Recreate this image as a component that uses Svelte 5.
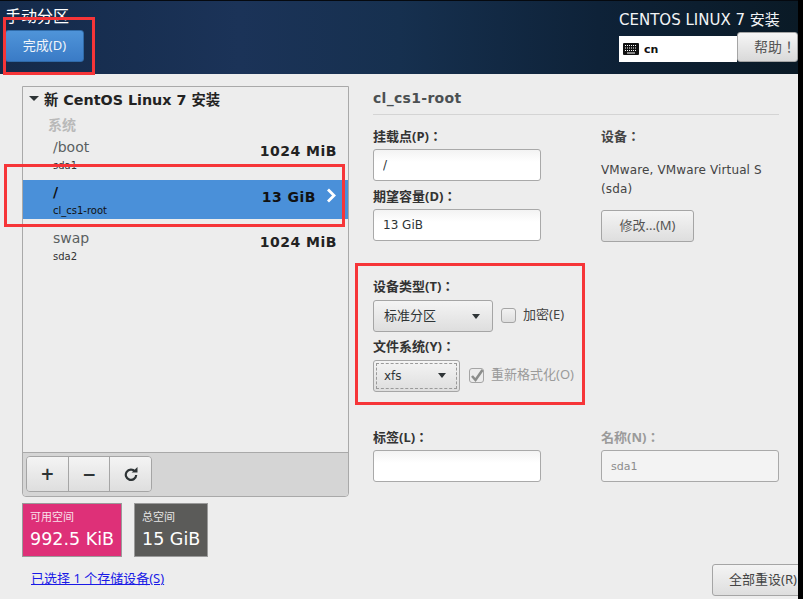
<script>
	const mounts = [
		{ path: '/boot', dev: 'sda1', size: '1024 MiB' },
		{ path: '/', dev: 'cl_cs1-root', size: '13 GiB', selected: true },
		{ path: 'swap', dev: 'sda2', size: '1024 MiB' }
	];
</script>

<div class="screen">
	<header>
		<div class="head-left">
			<h1>手动分区</h1>
			<button class="done">完成(D)</button>
		</div>
		<div class="head-right">
			<div class="product">CENTOS LINUX 7 安装</div>
			<div class="head-tools">
				<div class="kbd">
					<svg width="16" height="12" viewBox="0 0 16 12">
						<rect width="16" height="12" rx="1" fill="#111" />
						<path d="M2 2.5h12M2 5h12M2 7.5h12" stroke="#fff" stroke-width="1" stroke-dasharray="1 1" />
						<path d="M4 10h8" stroke="#fff" stroke-width="1" />
					</svg>
					<span>cn</span>
				</div>
				<button class="help">帮助！</button>
			</div>
		</div>
	</header>

	<main>
		<section class="left">
			<div class="panel">
				<div class="tree">
					<div class="root-row"><span class="caret"></span>新 CentOS Linux 7 安装</div>
					<div class="group">系统</div>
					{#each mounts as m}
						<div class="mount" class:selected={m.selected}>
							<div class="mount-names">
								<div class="mount-path">{m.path}</div>
								<div class="mount-dev">{m.dev}</div>
							</div>
							<div class="mount-size">{m.size}</div>
							{#if m.selected}
								<svg class="chev" width="11" height="15" viewBox="0 0 11 15">
									<path d="M2 1.5l6 6-6 6" fill="none" stroke="#fff" stroke-width="2.8" />
								</svg>
							{/if}
						</div>
					{/each}
				</div>
				<div class="toolbar">
					<div class="tool-group">
						<button>+</button>
						<button>−</button>
						<button aria-label="刷新">
							<svg width="14" height="14" viewBox="0 0 14 14">
								<path d="M11 4.4A5.2 5.2 0 1 0 12.2 8" fill="none" stroke="#2e3436" stroke-width="2.2" />
								<path d="M7.6 5.6h5.9V0z" fill="#2e3436" />
							</svg>
						</button>
					</div>
				</div>
			</div>
			<div class="tiles">
				<div class="tile free"><small>可用空间</small><strong>992.5 KiB</strong></div>
				<div class="tile total"><small>总空间</small><strong>15 GiB</strong></div>
			</div>
			<a class="devices" href="#devices">已选择 1 个存储设备(S)</a>
		</section>

		<section class="right">
			<h2>cl_cs1-root</h2>
			<div class="top-fields">
				<div class="col-a">
					<label for="mp">挂载点(P)：</label>
					<input id="mp" class="entry" value="/" />
					<label for="cap" class="second">期望容量(D)：</label>
					<input id="cap" class="entry" value="13 GiB" />
				</div>
				<div class="col-b">
					<div class="b-title">设备：</div>
					<p>VMware, VMware Virtual S<br />(sda)</p>
					<button class="modify">修改...(M)</button>
				</div>
			</div>

			<div class="type-box">
				<div class="label-row">设备类型(T)：</div>
				<div class="ctrl-row">
					<button class="combo wide">标准分区<span class="arrow"></span></button>
					<span class="check"></span>
					<span class="check-label">加密(E)</span>
				</div>
				<div class="label-row fs">文件系统(Y)：</div>
				<div class="ctrl-row">
					<button class="combo narrow"><span class="focus">xfs<span class="arrow"></span></span></button>
					<span class="check disabled">
						<svg width="16" height="16" viewBox="0 0 16 16">
							<path d="M3 8l3.5 4L13.5 2" fill="none" stroke="#8b8d8b" stroke-width="2.6" />
						</svg>
					</span>
					<span class="check-label muted">重新格式化(O)</span>
				</div>
			</div>

			<div class="bottom-fields">
				<div>
					<label for="tag">标签(L)：</label>
					<input id="tag" class="entry tag" value="" />
				</div>
				<div>
					<label for="nm" class="muted-label">名称(N)：</label>
					<input id="nm" class="entry name" value="sda1" disabled />
				</div>
			</div>

			<div class="reset-row"><button class="reset">全部重设(R)</button></div>
		</section>
	</main>

	<!-- red annotation rectangles drawn over the shot -->
	<div class="mark m1"></div>
	<div class="mark m2"></div>
	<div class="mark m3"></div>
</div>

<style>
	:global(body) {
		margin: 0;
		background: #000;
		font-family: 'DejaVu Sans', 'Noto Sans CJK SC', sans-serif;
	}

	* {
		box-sizing: border-box;
	}

	.screen {
		position: relative;
		width: 798px;
		height: 599px;
		overflow: hidden;
		background: #ededed;
		color: #2e3436;
		font-size: 12px;
	}

	button {
		font-family: 'Noto Sans', 'Noto Sans CJK SC', sans-serif;
		color: #2e3436;
		border: 1px solid #a5a5a5;
		border-radius: 3px;
		background: linear-gradient(#f4f4f4, #dedede);
		padding: 0 0 3px;
	}

	header {
		display: flex;
		justify-content: space-between;
		height: 74px;
		border-top: 1px solid #05090f;
		background: linear-gradient(90deg, #142a4a 0%, #1b3358 30%, #16304f 50%, #0e2238 75%, #0a1a26 100%);
	}

	.head-left {
		padding-left: 5px;
	}

	h1 {
		margin: 0;
		height: 29px;
		padding-top: 7px;
		font-size: 16px;
		line-height: 18px;
		font-weight: 400;
		color: #fff;
		overflow: hidden;
	}

	.done {
		display: block;
		width: 79px;
		height: 32px;
		border: 1px solid #2f6aa8;
		background: linear-gradient(#4f94d9, #3a7bc6);
		color: #f1f5fa;
		font-size: 13px;
	}

	.head-right {
		display: flex;
		flex-direction: column;
		width: 179px;
	}

	.product {
		height: 31px;
		padding-top: 11px;
		font-size: 15px;
		line-height: 16px;
		color: #f2f4f6;
		white-space: nowrap;
	}

	.head-tools {
		display: flex;
	}

	.kbd {
		display: flex;
		align-items: center;
		gap: 5px;
		width: 118px;
		height: 26px;
		margin-top: 4px;
		padding-left: 4px;
		background: #fff;
		font-weight: 700;
		font-size: 11px;
		color: #111;
	}

	.help {
		width: 61px;
		height: 30px;
		padding-left: 16px;
		font-family: 'Noto Sans', 'Noto Sans CJK TC', sans-serif;
		font-size: 14px;
		color: #555;
		text-align: left;
		white-space: nowrap;
		background: linear-gradient(#f6f6f6, #d9d9d9);
	}

	main {
		display: flex;
		height: 525px;
	}

	.left {
		width: 373px;
		padding: 12px 0 0 22px;
	}

	.panel {
		width: 327px;
		height: 411px;
		display: flex;
		flex-direction: column;
		border: 1px solid #a9a9a9;
		border-radius: 0 0 4px 4px;
		background: #ededed;
	}

	.tree {
		flex: 1;
	}

	.root-row {
		display: flex;
		align-items: center;
		height: 22px;
		padding-left: 6px;
		font-size: 14.3px;
		font-weight: 700;
		color: #222;
	}

	.caret {
		width: 0;
		height: 0;
		margin-right: 5px;
		border: 5px solid transparent;
		border-top: 5px solid #2e3436;
		border-bottom: 0;
	}

	.group {
		height: 26px;
		padding-left: 25px;
		font-size: 14px;
		line-height: 32px;
		font-weight: 700;
		color: #b9b9b9;
	}

	.mount {
		display: flex;
		position: relative;
		height: 39px;
		margin-bottom: 6px;
		padding: 2px 11px 0 30px;
	}

	.mount.selected {
		margin-bottom: 7px;
		background: #4a90d9;
	}

	.mount-names {
		flex: 1;
	}

	.mount-path {
		font-size: 14px;
		line-height: 20px;
		color: #5a5f61;
	}

	.selected .mount-path {
		color: #111;
		font-weight: 700;
	}

	.mount-dev {
		margin-top: 2px;
		font-size: 10px;
		line-height: 14px;
		color: #333;
	}

	.selected .mount-dev {
		color: #111;
	}

	.mount-size {
		font-size: 14px;
		line-height: 28px;
		letter-spacing: 0.5px;
		font-weight: 700;
		color: #222;
	}

	.selected .mount-size {
		margin-right: 21px;
		line-height: 30px;
		color: #111;
	}

	.chev {
		position: absolute;
		right: 11px;
		top: 8px;
	}

	.toolbar {
		height: 44px;
		padding: 3px;
		border-top: 1px solid #a9a9a9;
		background: #d5d5d5;
		border-radius: 0 0 4px 4px;
	}

	.tool-group {
		display: flex;
		width: 126px;
		height: 36px;
		border: 1px solid #a5a5a5;
		border-radius: 4px;
		overflow: hidden;
	}

	.tool-group button {
		flex: 1;
		display: flex;
		align-items: center;
		justify-content: center;
		border: 0;
		border-left: 1px solid #a5a5a5;
		border-radius: 0;
		padding: 0;
		font-family: 'DejaVu Sans', sans-serif;
		font-size: 17px;
		font-weight: 700;
	}

	.tool-group button:first-child {
		border-left: 0;
	}

	.tiles {
		display: flex;
		gap: 12px;
		margin-top: 6px;
	}

	.tile {
		display: flex;
		flex-direction: column;
		height: 54px;
		padding: 7px 0 0 7px;
		border: 1px solid #9a9a9a;
		color: #fff;
	}

	.tile small {
		font-size: 11px;
		line-height: 14px;
		opacity: 0.85;
	}

	.tile strong {
		margin-top: 4px;
		font-size: 17.5px;
		line-height: 20px;
		font-weight: 400;
		white-space: nowrap;
	}

	.free {
		width: 100px;
		background: #de3078;
	}

	.total {
		width: 74px;
		background: #5b5b59;
	}

	.devices {
		display: block;
		margin: 13px 0 0 9px;
		font-family: 'Noto Sans', 'Noto Sans CJK SC', sans-serif;
		font-size: 13px;
		line-height: 16px;
		color: #1a1ae6;
	}

	.right {
		flex: 1;
		padding-top: 12px;
	}

	h2 {
		margin: 0;
		width: 406px;
		height: 29px;
		font-size: 14px;
		line-height: 24px;
		letter-spacing: 0.3px;
		font-weight: 700;
		color: #4b5052;
		border-bottom: 1px solid #d4d4d4;
	}

	label,
	.label-row,
	.b-title {
		display: block;
		height: 19px;
		font-family: 'Noto Sans', 'Noto Sans CJK TC', sans-serif;
		font-size: 13px;
		line-height: 13px;
		font-weight: 700;
		color: #333;
	}

	.top-fields {
		display: flex;
		margin-top: 15px;
	}

	.col-a {
		width: 228px;
	}

	.second {
		margin-top: 9px;
	}

	.entry {
		display: block;
		width: 168px;
		height: 32px;
		padding: 0 9px;
		border: 1px solid #a9a9a9;
		border-radius: 3px;
		background: linear-gradient(#f3f3f3, #fff 40%);
		font-family: inherit;
		font-size: 12px;
		color: #2e3436;
		outline: none;
	}

	.col-b {
		color: #444;
	}

	.b-title {
		color: #444;
	}

	.col-b p {
		margin: 12px 0 0;
		font-size: 12px;
		line-height: 19px;
		letter-spacing: 0.13px;
		white-space: nowrap;
	}

	.modify {
		display: block;
		width: 93px;
		height: 32px;
		margin-top: 11px;
		font-size: 13px;
		color: #555;
	}

	.type-box {
		margin-top: 34px;
	}

	.label-row {
		height: 24px;
		line-height: 20px;
	}

	.label-row.fs {
		margin-top: 4px;
	}

	.ctrl-row {
		display: flex;
		align-items: center;
		height: 32px;
	}

	.combo {
		display: flex;
		align-items: center;
		justify-content: space-between;
		height: 32px;
		padding: 0 12px 3px 10px;
		font-size: 13px;
	}

	.combo.wide {
		width: 120px;
	}

	.combo.wide .arrow {
		margin-top: 3px;
	}

	.combo.narrow {
		width: 87px;
		padding: 2px;
	}

	.focus {
		flex: 1;
		display: flex;
		align-items: center;
		justify-content: space-between;
		height: 100%;
		padding: 0 10px 1px 7px;
		border: 1px dashed #9a9a9a;
		font-family: 'DejaVu Sans', sans-serif;
		font-size: 12px;
	}

	.arrow {
		width: 0;
		height: 0;
		border: 4.5px solid transparent;
		border-top: 5px solid #2e3436;
		border-bottom: 0;
	}

	.check {
		display: inline-flex;
		align-items: center;
		justify-content: center;
		width: 15px;
		height: 15px;
		margin: 0 0 1px 8px;
		border: 1px solid #a5a5a5;
		border-radius: 3px;
		background: linear-gradient(#f2f2f2, #dedede);
	}

	.check.disabled {
		margin-left: 9px;
		background: #ececec;
	}

	.check svg {
		flex: none;
	}

	.check-label {
		margin: 0 0 5px 7px;
		font-family: 'Noto Sans', 'Noto Sans CJK SC', sans-serif;
		font-size: 13px;
		color: #444;
	}

	.muted {
		color: #9a9a9a;
	}

	.bottom-fields {
		display: flex;
		margin-top: 39px;
	}

	.bottom-fields > div:first-child {
		width: 228px;
	}

	.muted-label {
		color: #9a9a9a;
	}

	.name {
		width: 178px;
		background: #f3f3f3;
		color: #8c8c8c;
		font-size: 11px;
	}

	.reset-row {
		display: flex;
		justify-content: flex-end;
		margin-top: 82px;
	}

	.reset {
		width: 92px;
		height: 32px;
		margin-right: -6px;
		padding-left: 16px;
		font-size: 13px;
		color: #444;
		text-align: left;
		white-space: nowrap;
	}

	.mark {
		position: absolute;
		border: 3px solid #f63538;
		pointer-events: none;
	}

	.m1 {
		left: 3px;
		top: 17px;
		width: 92px;
		height: 58px;
	}

	.m2 {
		left: 4px;
		top: 164px;
		width: 341px;
		height: 63px;
	}

	.m3 {
		left: 355px;
		top: 263px;
		width: 230px;
		height: 142px;
	}
</style>
